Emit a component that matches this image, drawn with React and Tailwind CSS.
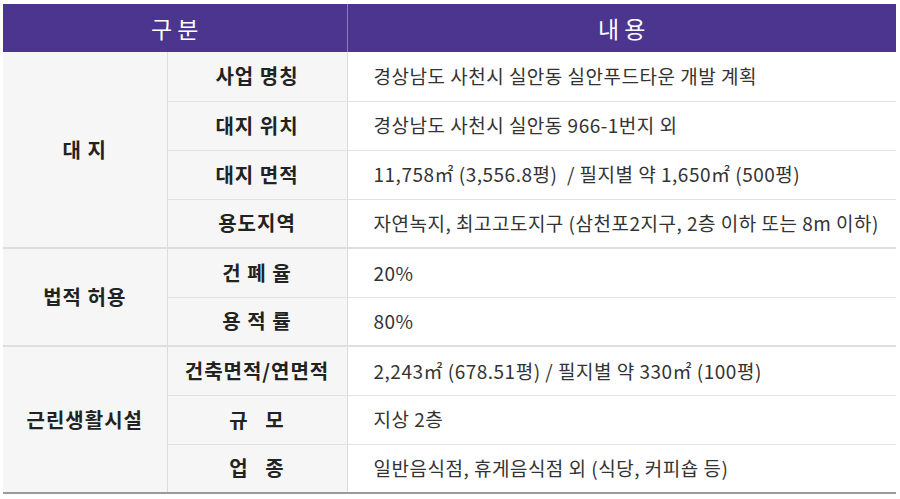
import React from 'react';

const groups = [
  {
    name: '대 지',
    rows: [
      ['사업 명칭', '경상남도 사천시 실안동 실안푸드타운 개발 계획'],
      ['대지 위치', '경상남도 사천시 실안동 966-1번지 외'],
      ['대지 면적', '11,758㎡ (3,556.8평)  / 필지별 약 1,650㎡ (500평)'],
      ['용도지역', '자연녹지, 최고고도지구 (삼천포2지구, 2층 이하 또는 8m 이하)'],
    ],
  },
  {
    name: '법적 허용',
    rows: [
      ['건 폐 율', '20%'],
      ['용 적 률', '80%'],
    ],
  },
  {
    name: '근린생활시설',
    rows: [
      ['건축면적/연면적', '2,243㎡ (678.51평) / 필지별 약 330㎡ (100평)'],
      ['규   모', '지상 2층'],
      ['업   종', '일반음식점, 휴게음식점 외 (식당, 커피숍 등)'],
    ],
  },
];

const App = () => {
  return (
    <div
      className="w-[900px] h-[499px] bg-white pt-[4px] pl-[3px]"
      style={{ fontFamily: '"Noto Sans CJK KR", "Noto Sans", sans-serif' }}
    >
      <table className="w-[893px] border-collapse table-fixed">
        <colgroup>
          <col className="w-[164px]" />
          <col className="w-[180px]" />
          <col />
        </colgroup>
        <thead>
          <tr className="h-[48px] bg-[#4b358f] text-white text-[23px]">
            <th colSpan={2} className="border-r border-[#8c7cc0] font-normal">구 분</th>
            <th className="font-normal">내 용</th>
          </tr>
        </thead>
        <tbody>
          {groups.map((g, gi) =>
            g.rows.map((r, ri) => {
              const last = ri === g.rows.length - 1;
              const rowBorder = last
                ? gi === groups.length - 1
                  ? 'border-b-2 border-[#9a9a9a]'
                  : 'border-b-2 border-[#dedede]'
                : 'border-b border-[#e2e2e2]';
              return (
                <tr key={`${gi}-${ri}`} className="h-[49px]">
                  {ri === 0 && (
                    <td
                      rowSpan={g.rows.length}
                      className={`bg-[#f6f6f6] text-center text-[20px] tracking-[1px] font-bold text-[#222] border-r border-[#dcdcdc] ${
                        gi === groups.length - 1 ? 'border-b-2 border-b-[#9a9a9a]' : 'border-b-2 border-b-[#dedede]'
                      }`}
                    >
                      {g.name}
                    </td>
                  )}
                  <td className={`bg-[#f6f6f6] text-center text-[20px] tracking-[1px] font-bold text-[#222] border-r border-r-[#dcdcdc] whitespace-pre ${rowBorder}`}>
                    {r[0]}
                  </td>
                  <td className={`pl-[26px] text-[19px] tracking-[0.5px] text-[#333] whitespace-pre ${rowBorder}`}>
                    {r[1]}
                  </td>
                </tr>
              );
            })
          )}
        </tbody>
      </table>
    </div>
  );
};

export default App;
